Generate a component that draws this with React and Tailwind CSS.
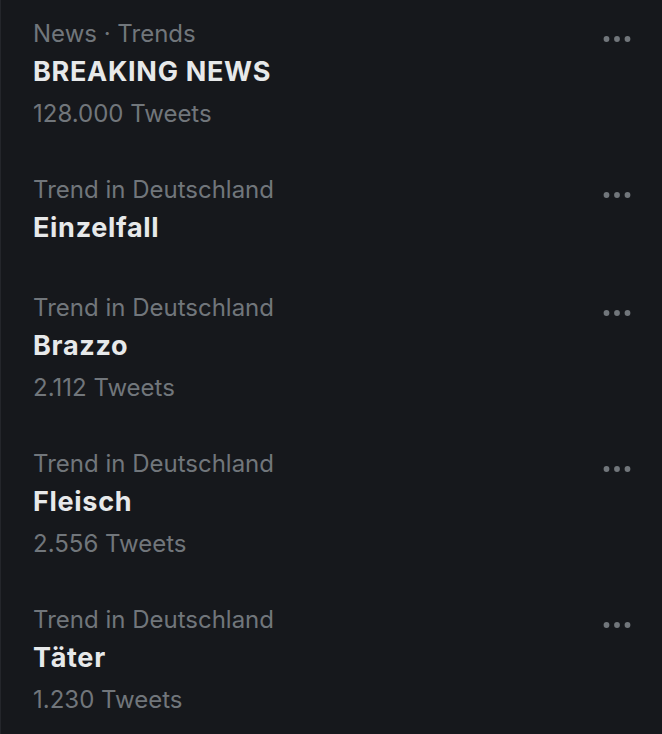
import React from "react";

const trends = [
  { cat: "News · Trends", title: "BREAKING NEWS", count: "128.000 Tweets" },
  { cat: "Trend in Deutschland", title: "Einzelfall" },
  { cat: "Trend in Deutschland", title: "Brazzo", count: "2.112 Tweets" },
  { cat: "Trend in Deutschland", title: "Fleisch", count: "2.556 Tweets" },
  { cat: "Trend in Deutschland", title: "Täter", count: "1.230 Tweets" },
];

function Dots() {
  return (
    <svg width="32" height="12" viewBox="0 0 32 12" className="block">
      <circle cx="5.5" cy="6" r="2.9" fill="#71767b" />
      <circle cx="16" cy="6" r="2.9" fill="#71767b" />
      <circle cx="26.5" cy="6" r="2.9" fill="#71767b" />
    </svg>
  );
}

export default function App() {
  return (
    <div
      className="w-[662px] h-[734px] overflow-hidden bg-[#16181c] border-l border-[#24262b]"
      style={{ fontFamily: 'Inter, "Open Sans", sans-serif' }}
    >
      <div className="-mt-[3px]">
        {trends.map((t, i) => (
          <div key={i} className="flex pl-[32px] pr-[29px] py-[21px]">
            <div className="flex-1 min-w-0">
              <div className="h-[32px] leading-[32px] text-[24px] text-[#71767b]">{t.cat}</div>
              <div className="h-[44px] leading-[44px] text-[27px] font-bold tracking-[0.7px] text-[#e7e9ea]">{t.title}</div>
              {t.count && (
                <div className="mt-[2px] h-[36px] leading-[36px] text-[24px] text-[#71767b]">{t.count}</div>
              )}
            </div>
            <div className="pt-[15px]">
              <Dots />
            </div>
          </div>
        ))}
      </div>
    </div>
  );
}
